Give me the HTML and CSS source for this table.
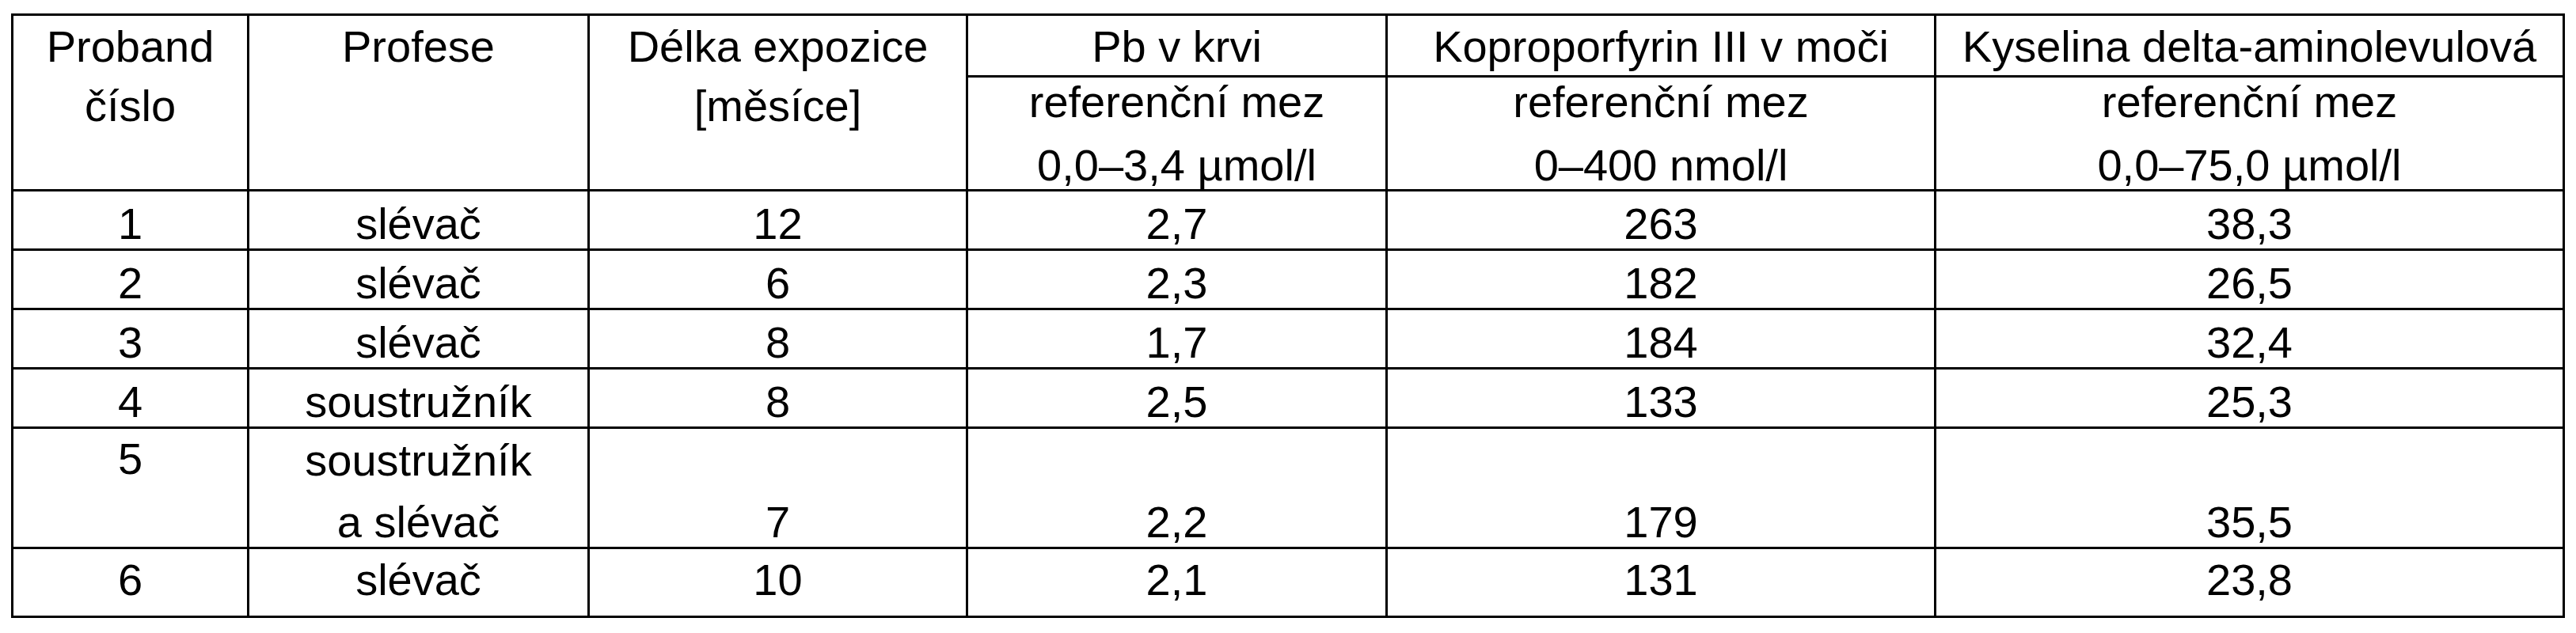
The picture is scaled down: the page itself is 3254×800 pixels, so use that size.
FILE: index.html
```html
<!DOCTYPE html>
<html lang="cs">
<head>
<meta charset="utf-8">
<title>Tabulka probandů</title>
<link rel="stylesheet" href="styles.css">
</head>
<body>
<table class="results">
  <colgroup>
    <col class="c1"><col class="c2"><col class="c3"><col class="c4"><col class="c5"><col class="c6">
  </colgroup>
  <thead>
    <tr class="h1">
      <th rowspan="2" class="top"><div class="ln">Proband</div><div class="ln g75">číslo</div></th>
      <th rowspan="2" class="top"><div class="ln">Profese</div></th>
      <th rowspan="2" class="top"><div class="ln">Délka expozice</div><div class="ln g75">[měsíce]</div></th>
      <th class="top hd"><div class="ln">Pb v krvi</div></th>
      <th class="top hd"><div class="ln">Koproporfyrin III v moči</div></th>
      <th class="top hd"><div class="ln">Kyselina delta-aminolevulová</div></th>
    </tr>
    <tr class="h2">
      <th class="sub"><div class="ln">referenční mez</div><div class="ln g80">0,0–3,4 µmol/l</div></th>
      <th class="sub"><div class="ln">referenční mez</div><div class="ln g80">0–400 nmol/l</div></th>
      <th class="sub"><div class="ln">referenční mez</div><div class="ln g80">0,0–75,0 µmol/l</div></th>
    </tr>
  </thead>
  <tbody>
    <tr class="r"><td>1</td><td>slévač</td><td>12</td><td>2,7</td><td>263</td><td>38,3</td></tr>
    <tr class="r"><td>2</td><td>slévač</td><td>6</td><td>2,3</td><td>182</td><td>26,5</td></tr>
    <tr class="r"><td>3</td><td>slévač</td><td>8</td><td>1,7</td><td>184</td><td>32,4</td></tr>
    <tr class="r"><td>4</td><td>soustružník</td><td>8</td><td>2,5</td><td>133</td><td>25,3</td></tr>
    <tr class="r tall"><td class="first">5</td><td><div class="ln">soustružník</div><div class="ln g78">a slévač</div></td><td>7</td><td>2,2</td><td>179</td><td>35,5</td></tr>
    <tr class="r last"><td>6</td><td>slévač</td><td>10</td><td>2,1</td><td>131</td><td>23,8</td></tr>
  </tbody>
</table>
</body>
</html>
```
FILE: styles.css
```css
html, body {
  margin: 0;
  padding: 0;
  background: #ffffff;
}

body {
  padding: 17px 0 0 14px;
}

.results {
  table-layout: fixed;
  width: 3226px;
  border-collapse: separate;
  border-spacing: 0;
  border-top: 3px solid #000;
  border-left: 3px solid #000;
  font-family: "Liberation Sans", Arial, sans-serif;
  font-size: 56px;
  color: #000;
}

.c1 { width: 298px; }
.c2 { width: 430px; }
.c3 { width: 478px; }
.c4 { width: 530px; }
.c5 { width: 693px; }
.c6 { width: 794px; }

.results th,
.results td {
  box-sizing: border-box;
  border-right: 3px solid #000;
  border-bottom: 3px solid #000;
  padding: 0 0 1px 0;
  text-align: center;
  font-weight: normal;
  line-height: 60px;
  white-space: nowrap;
  vertical-align: bottom;
}

.ln {
  line-height: 60px;
}

.g75 { margin-top: 15px; }
.g78 { margin-top: 18px; }
.g80 { margin-top: 20px; }

.results th.top {
  vertical-align: top;
  padding-top: 9px;
}

.results th.hd {
  height: 78px;
}

.results th.sub {
  height: 144px;
  vertical-align: bottom;
  padding-bottom: 0;
}

.results tr.r td {
  height: 75px;
}

.results tr.tall td {
  height: 152px;
}

.results tr.tall td.first {
  vertical-align: top;
  padding-top: 8px;
}

.results tr.last td {
  height: 87px;
  padding-bottom: 15px;
}
```
